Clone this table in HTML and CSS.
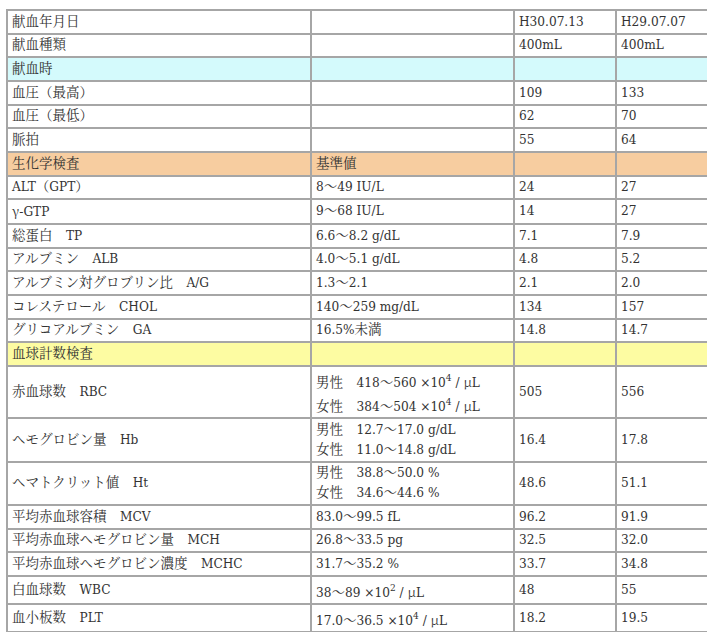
FILE: index.html
```html
<!DOCTYPE html>
<html lang="ja">
<head>
<meta charset="utf-8">
<title>献血記録</title>
<link rel="stylesheet" href="styles.css">
</head>
<body>
<table class="record">
  <tr><td class="c1">献血年月日</td><td class="c2"></td><td class="c3">H30.07.13</td><td class="c4">H29.07.07</td></tr>
  <tr><td>献血種類</td><td></td><td>400mL</td><td>400mL</td></tr>
  <tr class="sec-cyan"><td>献血時</td><td></td><td></td><td></td></tr>
  <tr><td>血圧（最高）</td><td></td><td>109</td><td>133</td></tr>
  <tr><td>血圧（最低）</td><td></td><td>62</td><td>70</td></tr>
  <tr><td>脈拍</td><td></td><td>55</td><td>64</td></tr>
  <tr class="sec-peach"><td>生化学検査</td><td>基準値</td><td></td><td></td></tr>
  <tr><td>ALT（GPT）</td><td>8〜49 IU/L</td><td>24</td><td>27</td></tr>
  <tr><td><span class="gr">γ</span>-GTP</td><td>9〜68 IU/L</td><td>14</td><td>27</td></tr>
  <tr><td>総蛋白　TP</td><td>6.6〜8.2 g/dL</td><td>7.1</td><td>7.9</td></tr>
  <tr><td>アルブミン　ALB</td><td>4.0〜5.1 g/dL</td><td>4.8</td><td>5.2</td></tr>
  <tr><td>アルブミン対グロブリン比　A/G</td><td>1.3〜2.1</td><td>2.1</td><td>2.0</td></tr>
  <tr><td>コレステロール　CHOL</td><td>140〜259 mg/dL</td><td>134</td><td>157</td></tr>
  <tr><td>グリコアルブミン　GA</td><td>16.5%未満</td><td>14.8</td><td>14.7</td></tr>
  <tr class="sec-yellow"><td>血球計数検査</td><td></td><td></td><td></td></tr>
  <tr><td>赤血球数　RBC</td><td>男性　418〜560 ×10<sup>4</sup> / <span class="gr">μ</span>L<br>女性　384〜504 ×10<sup>4</sup> / <span class="gr">μ</span>L</td><td>505</td><td>556</td></tr>
  <tr><td>ヘモグロビン量　Hb</td><td>男性　12.7〜17.0 g/dL<br>女性　11.0〜14.8 g/dL</td><td>16.4</td><td>17.8</td></tr>
  <tr><td>ヘマトクリット値　Ht</td><td>男性　38.8〜50.0 %<br>女性　34.6〜44.6 %</td><td>48.6</td><td>51.1</td></tr>
  <tr><td>平均赤血球容積　MCV</td><td>83.0〜99.5 fL</td><td>96.2</td><td>91.9</td></tr>
  <tr><td>平均赤血球ヘモグロビン量　MCH</td><td>26.8〜33.5 pg</td><td>32.5</td><td>32.0</td></tr>
  <tr><td>平均赤血球ヘモグロビン濃度　MCHC</td><td>31.7〜35.2 %</td><td>33.7</td><td>34.8</td></tr>
  <tr><td>白血球数　WBC</td><td>38〜89 ×10<sup>2</sup> / <span class="gr">μ</span>L</td><td>48</td><td>55</td></tr>
  <tr><td>血小板数　PLT</td><td>17.0〜36.5 ×10<sup>4</sup> / <span class="gr">μ</span>L</td><td>18.2</td><td>19.5</td></tr>
</table>
</body>
</html>
```

FILE: styles.css
```css
html {
  overflow: hidden;
}

body {
  margin: 9px 0 0 6px;
  background: #ffffff;
  color: #333333;
  font-family: "DejaVu Serif", "Noto Serif CJK JP", "Noto Sans CJK JP", serif;
  font-stretch: condensed;
  font-size: 13.5px;
}

.record {
  border-collapse: separate;
  border-spacing: 0;
  table-layout: fixed;
  width: 713px;
  border-top: 2px solid #a6a6a6;
  border-left: 2px solid #a6a6a6;
}

.record td {
  box-sizing: border-box;
  border-right: 2px solid #a6a6a6;
  border-bottom: 2px solid #a6a6a6;
  padding: 0.5px 4px 1.5px 4px;
  line-height: 19.67px;
  vertical-align: middle;
  white-space: nowrap;
  overflow: hidden;
}

.record .c1 { width: 304px; }
.record .c2 { width: 203px; }
.record .c3 { width: 102px; }
.record .c4 { width: 102px; }

.record sup {
  font-size: 10px;
}

.gr {
  font-family: "Noto Serif CJK JP", "Noto Sans CJK JP", sans-serif;
  font-feature-settings: "fwid";
}

.sec-cyan td { background: #d4fafc; }
.sec-peach td { background: #f7cda0; }
.sec-yellow td { background: #fdfca2; }
```
